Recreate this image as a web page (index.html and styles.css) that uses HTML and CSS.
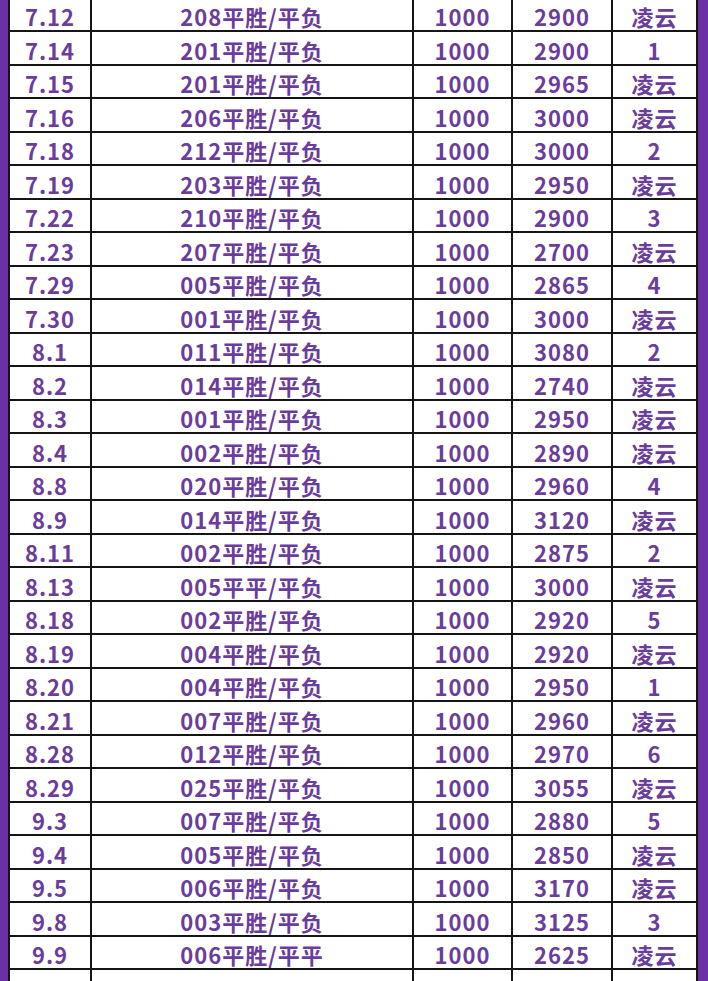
FILE: index.html
```html
<!DOCTYPE html>
<html lang="zh">
<head>
<meta charset="utf-8">
<link rel="stylesheet" href="styles.css">
</head>
<body>
<div class="frame">
  <div class="sheet">
    <div class="c">7.12</div><div class="c">208平胜/平负</div><div class="c">1000</div><div class="c">2900</div><div class="c">凌云</div>
    <div class="c">7.14</div><div class="c">201平胜/平负</div><div class="c">1000</div><div class="c">2900</div><div class="c">1</div>
    <div class="c">7.15</div><div class="c">201平胜/平负</div><div class="c">1000</div><div class="c">2965</div><div class="c">凌云</div>
    <div class="c">7.16</div><div class="c">206平胜/平负</div><div class="c">1000</div><div class="c">3000</div><div class="c">凌云</div>
    <div class="c">7.18</div><div class="c">212平胜/平负</div><div class="c">1000</div><div class="c">3000</div><div class="c">2</div>
    <div class="c">7.19</div><div class="c">203平胜/平负</div><div class="c">1000</div><div class="c">2950</div><div class="c">凌云</div>
    <div class="c">7.22</div><div class="c">210平胜/平负</div><div class="c">1000</div><div class="c">2900</div><div class="c">3</div>
    <div class="c">7.23</div><div class="c">207平胜/平负</div><div class="c">1000</div><div class="c">2700</div><div class="c">凌云</div>
    <div class="c">7.29</div><div class="c">005平胜/平负</div><div class="c">1000</div><div class="c">2865</div><div class="c">4</div>
    <div class="c">7.30</div><div class="c">001平胜/平负</div><div class="c">1000</div><div class="c">3000</div><div class="c">凌云</div>
    <div class="c">8.1</div><div class="c">011平胜/平负</div><div class="c">1000</div><div class="c">3080</div><div class="c">2</div>
    <div class="c">8.2</div><div class="c">014平胜/平负</div><div class="c">1000</div><div class="c">2740</div><div class="c">凌云</div>
    <div class="c">8.3</div><div class="c">001平胜/平负</div><div class="c">1000</div><div class="c">2950</div><div class="c">凌云</div>
    <div class="c">8.4</div><div class="c">002平胜/平负</div><div class="c">1000</div><div class="c">2890</div><div class="c">凌云</div>
    <div class="c">8.8</div><div class="c">020平胜/平负</div><div class="c">1000</div><div class="c">2960</div><div class="c">4</div>
    <div class="c">8.9</div><div class="c">014平胜/平负</div><div class="c">1000</div><div class="c">3120</div><div class="c">凌云</div>
    <div class="c">8.11</div><div class="c">002平胜/平负</div><div class="c">1000</div><div class="c">2875</div><div class="c">2</div>
    <div class="c">8.13</div><div class="c">005平平/平负</div><div class="c">1000</div><div class="c">3000</div><div class="c">凌云</div>
    <div class="c">8.18</div><div class="c">002平胜/平负</div><div class="c">1000</div><div class="c">2920</div><div class="c">5</div>
    <div class="c">8.19</div><div class="c">004平胜/平负</div><div class="c">1000</div><div class="c">2920</div><div class="c">凌云</div>
    <div class="c">8.20</div><div class="c">004平胜/平负</div><div class="c">1000</div><div class="c">2950</div><div class="c">1</div>
    <div class="c">8.21</div><div class="c">007平胜/平负</div><div class="c">1000</div><div class="c">2960</div><div class="c">凌云</div>
    <div class="c">8.28</div><div class="c">012平胜/平负</div><div class="c">1000</div><div class="c">2970</div><div class="c">6</div>
    <div class="c">8.29</div><div class="c">025平胜/平负</div><div class="c">1000</div><div class="c">3055</div><div class="c">凌云</div>
    <div class="c">9.3</div><div class="c">007平胜/平负</div><div class="c">1000</div><div class="c">2880</div><div class="c">5</div>
    <div class="c">9.4</div><div class="c">005平胜/平负</div><div class="c">1000</div><div class="c">2850</div><div class="c">凌云</div>
    <div class="c">9.5</div><div class="c">006平胜/平负</div><div class="c">1000</div><div class="c">3170</div><div class="c">凌云</div>
    <div class="c">9.8</div><div class="c">003平胜/平负</div><div class="c">1000</div><div class="c">3125</div><div class="c">3</div>
    <div class="c">9.9</div><div class="c">006平胜/平平</div><div class="c">1000</div><div class="c">2625</div><div class="c">凌云</div>
    <div class="c"></div><div class="c"></div><div class="c"></div><div class="c"></div><div class="c"></div>
  </div>
</div>
</body>
</html>
```

FILE: styles.css
```css
html, body {
  margin: 0;
  padding: 0;
  background: #6b30a6;
  overflow: hidden;
  height: 981px;
}
.frame {
  padding-left: 8px;
  padding-right: 10px;
}
.sheet {
  margin-top: -3.5px;
  background: #151515;
  padding: 2px;
  display: grid;
  grid-template-columns: 80px 320px 97px 98px 83px;
  grid-auto-rows: 31.5px;
  gap: 2px;
  font-family: "Noto Sans CJK SC", "Noto Sans", sans-serif;
  font-weight: 700;
  font-size: 22px;
  letter-spacing: 1px;
  color: #6a3c9c;
}
.c {
  background: #fff;
  display: flex;
  align-items: center;
  justify-content: center;
  line-height: 1;
  padding-top: 4px;
  box-sizing: border-box;
}
```
